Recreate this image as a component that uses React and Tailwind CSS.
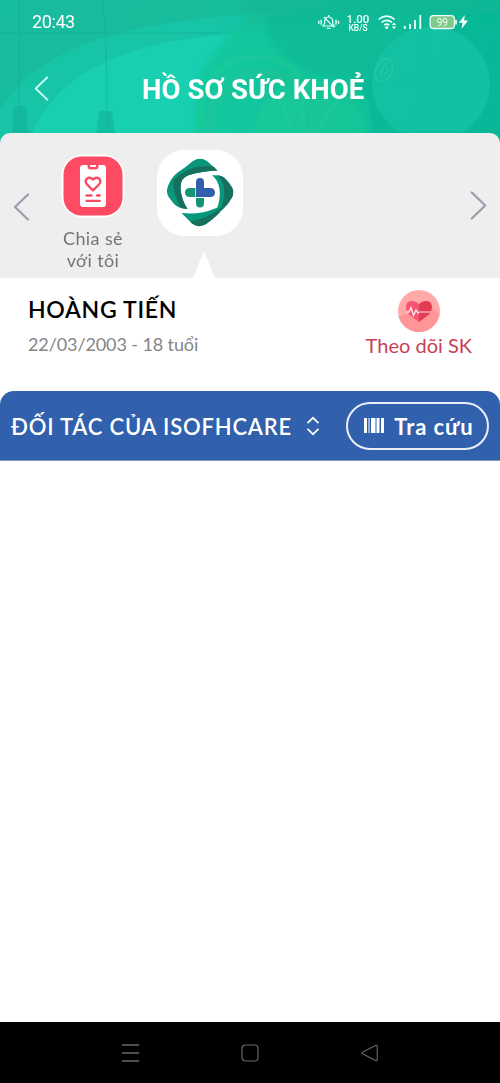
import { useState } from "react";

const PROFILE = {
  name: "HOÀNG TIẾN",
  birthday: "22/03/2003 - 18 tuổi",
};

function HeaderBackground() {
  return (
    <svg
      className="absolute inset-0 w-full h-full"
      viewBox="0 0 500 145"
      preserveAspectRatio="none"
      aria-hidden="true"
    >
      <defs>
        <linearGradient id="base" x1="0" x2="1" y1="0" y2="0.15">
          <stop offset="0" stopColor="#18bc9e" />
          <stop offset="0.5" stopColor="#18bd9b" />
          <stop offset="0.75" stopColor="#0cba98" />
          <stop offset="1" stopColor="#06b897" />
        </linearGradient>
        <linearGradient id="sweep" x1="0" x2="1" y1="0" y2="0">
          <stop offset="0" stopColor="#18cfb0" />
          <stop offset="0.65" stopColor="#18d0b0" />
          <stop offset="1" stopColor="#13c69c" stopOpacity="0.25" />
        </linearGradient>
        <filter id="soft" x="-10%" y="-10%" width="120%" height="120%">
          <feGaussianBlur stdDeviation="2.5" />
        </filter>
      </defs>
      <rect width="500" height="145" fill="url(#base)" />
      <path d="M0 110C35 55 100 22 270 13V145H0Z" fill="#18c6a9" opacity="0.8" />
      <path d="M28 145C45 85 110 40 240 34Q290 30 320 45V145Z" fill="url(#sweep)" />
      {/* fruit slices */}
      <g filter="url(#soft)">
        <path d="M250 14Q222 36 200 75Q190 100 196 150H370Q378 90 345 76Q290 76 276 30Z" fill="#15c498" opacity="0.7" />
        <path d="M262 20Q300 8 420 14V78Q350 84 305 70Q270 52 262 20Z" fill="#0fbb97" opacity="0.75" />
        <path d="M202 145C190 95 218 55 260 57Q296 62 300 80" fill="none" stroke="#1bcb91" strokeWidth="6" opacity="0.35" />
        <circle cx="262" cy="124" r="51" fill="none" stroke="#18c08e" strokeWidth="12" opacity="0.25" />
        <circle cx="310" cy="136" r="56" fill="#20cb98" opacity="0.35" />
        <path d="M302 90L304 145M279 98L299 145M340 97L307 145" fill="none" stroke="#45d8a3" strokeWidth="2" opacity="0.25" />
        <path d="M240 -6H506V12Q350 20 250 22Z" fill="#16b594" opacity="0.5" />
      </g>
      <path d="M0 33H223M19 0V145M102 0Q107 18 107 145" fill="none" stroke="#13af93" strokeWidth="1.6" opacity="0.45" />
      <path d="M14 106H26L29 145H11ZM99 111H112L117 145H95Z" fill="#10b193" opacity="0.55" />
      <ellipse cx="431" cy="84" rx="59" ry="57" fill="#16c3a5" opacity="0.75" />
      <ellipse cx="384" cy="70" rx="8" ry="12" fill="#14c09f" stroke="#29ceb0" strokeWidth="1.2" transform="rotate(25 384 70)" opacity="0.7" />
      <path d="M381 76Q381 67 387 63M385 75Q389 71 387 67" fill="none" stroke="#36cfb5" opacity="0.7" />
    </svg>
  );
}

function StatusIcons() {
  return (
    <div className="flex items-center">
      {/* muted bell */}
      <svg className="w-[23px] h-5" viewBox="317 12 23 20" fill="none" stroke="#e9fffa" aria-hidden="true">
        <path d="M318.8 20.8V23.8M321.2 19.8V24.8M336 19.8V24.8M338.5 20.8V23.8" strokeWidth="1.4" />
        <path d="M323 26H334.5L332.7 23.5V20.5Q332 17 328.7 17Q325.3 17 324.7 20.5V23.3ZM328.7 15V17M323.8 16.8L334 27.3M327 28.3H330.5" strokeWidth="1.2" />
      </svg>
      {/* network speed */}
      <div className="w-9 pt-px flex flex-col items-center font-['Roboto',sans-serif] font-medium text-[#effffb]">
        <span className="text-[11.5px] leading-[10px]">1.00</span>
        <span className="text-[8.5px] leading-[8px]">KB/S</span>
      </div>
      <svg className="w-[93px] h-5" viewBox="376 12 93 20" fill="none" stroke="#e9fffa" aria-hidden="true">
        {/* wifi */}
        <path d="M378.7 19.3Q386.5 12.8 394.7 19.3M381.5 22.4Q386.7 18.2 392 22.4M384 25.2Q386.8 23 389.4 25.2" strokeWidth="1.7" />
        <circle cx="386.8" cy="27.6" r="1.5" fill="#e9fffa" stroke="none" />
        <path d="M391.8 25L394 22.4L396.2 25ZM391.8 26.6L394 29.2L396.2 26.6Z" fill="#e9fffa" stroke="none" />
        {/* signal */}
        <path d="M404.8 26V29M410 24V29M415 20V29M420.3 15V29" strokeWidth="1.8" />
        {/* battery */}
        <rect x="430.2" y="15.7" width="24.2" height="12.8" rx="3.2" fill="#80c98c" strokeWidth="1.3" />
        <path d="M456 20V24.5" strokeWidth="1.6" />
        <text x="442.3" y="25.7" textAnchor="middle" className="font-['Roboto',sans-serif] text-[10px]" fill="#ecfff5" stroke="none">99</text>
        <path d="M464.7 15L459 22.7H462.6L461.5 29L468 20.5H464.2Z" fill="#fff" stroke="none" />
      </svg>
    </div>
  );
}

function ShareIcon() {
  return (
    <svg className="w-16 h-16" viewBox="0 0 64 64" aria-hidden="true">
      <rect x="0.5" y="0.5" width="63" height="63" rx="21" fill="#fff" />
      <rect x="2.5" y="2.5" width="59" height="59" rx="18" fill="#fe4b63" />
      <path d="M22 11H26.5V12.5Q26.5 15.5 29.5 15.5H34.5Q37.5 15.5 37.5 12.5V11H42Q45 11 45 14V50Q45 53 42 53H22Q19 53 19 50V14Q19 11 22 11Z" fill="#fff" />
      <path d="M29 11H35V12Q35 13 34 13H30Q29 13 29 12Z" fill="#fff" />
      <path d="M32 36.3L26 30.5C22 26 28 20.8 32 25.6C36 20.8 42 26 38 30.5Z" fill="none" stroke="#f94a63" strokeWidth="2.4" strokeLinejoin="round" />
      <path d="M25.5 41.5H30.5M36 41.5H38.8M25.5 46.8H38.8" stroke="#f94a63" strokeWidth="2.3" strokeLinecap="round" />
    </svg>
  );
}

function HospitalLogo() {
  return (
    <svg className="w-[86px] h-[86px]" viewBox="157 150 86 86" aria-hidden="true">
      <rect x="157" y="150" width="86" height="86" rx="27" fill="#fff" />
      {/* left blade */}
      <path d="M187.5 209Q179 209 174 204L169 197.5Q165.5 192 168 186Q171 178 177 173Q186 167 193 161Q200 156.5 207 161L217.5 170.5Q202 171 189 175Q180 178 180.5 188Q181 199 187.5 209Z" fill="#08977a" />
      <path d="M187.5 209Q183 208.500 180 207Q172 190 173.500 180Q187 167 201 166.500Q208 165.500 213.500 166.800L217.500 170.500Q202 171 189 175Q180 178 180.500 188Q181 199 187.500 209Z" fill="#17705d" />
      {/* right blade */}
      <path d="M212 175.300Q220 174.500 224.500 178Q229 182 232 187.500Q234.500 192 232 197.500Q228 205 222 210L216 211Q221 199 219.500 189Q218 180 212 175.300Z" fill="#08977a" />
      <path d="M217 175.300Q222 175.300 225.500 179Q229.500 183 232 187.500Q234.500 192 232 197.500Q228 205 222 210L220 210Q227 194 223 184Q221 178 217 175.300Z" fill="#17705d" />
      {/* bottom blade */}
      <path d="M181.500 213Q200 215 215 208.500L225 205Q220 214 207.500 223Q200 229 192 223.500Z" fill="#08977a" />
      <path d="M190.500 221.500Q209 218 225.500 204.500Q220 214 207.500 223Q200 229 192 223.500Z" fill="#17705d" />
      {/* cross */}
      <path d="M195.300 188H190Q185 188 185 192.500Q185 197 190 197H195.300Z" fill="#139675" />
      <path d="M196 198V203Q196 207.500 200 207.500Q204 207.500 204 203V198Z" fill="#139675" />
      <path d="M196 197V182Q196 178 200 178Q204 178 204 182V188H210Q215 188 215 192.500Q215 197 210 197Z" fill="#315fad" />
    </svg>
  );
}

function HeartIcon() {
  return (
    <svg className="w-[42px] h-[42px]" viewBox="398 290 42 42" aria-hidden="true">
      <circle cx="419" cy="311" r="21" fill="#ffa9a9" />
      <path d="M408 314L398.300 316Q402 329 416 332Q434 333 439.500 315L430 305Z" fill="#ff9597" />
      <path d="M419 322L409 314.500C403 307 407 300.500 412 301Q417 301 419 304.500Z" fill="#f65571" />
      <path d="M419 322L429 314.500C435 307 431 300.500 426 301Q421 301 419 304.500Z" fill="#e33c52" />
      <path d="M407 312H409L411 307.500L413.500 315.500L416 310L418 313L419 312" fill="none" stroke="#fff2f4" strokeWidth="1.3" />
      <path d="M419 312H431" stroke="#f6a9b1" strokeWidth="1.5" />
    </svg>
  );
}

function Chevron({ flip, className }) {
  return (
    <svg className={className} viewBox="0 0 16 28" fill="none" stroke="currentColor" strokeWidth="2.2" strokeLinecap="round" strokeLinejoin="round" aria-hidden="true">
      <path d={flip ? "M1.5 1.5L14.5 14L1.5 26.5" : "M14.5 1.5L1.5 14L14.5 26.5"} />
    </svg>
  );
}

export default function App() {
  const [expanded, setExpanded] = useState(false);

  return (
    <div className="w-[500px] h-[1083px] flex flex-col bg-white overflow-hidden font-['Lato','Noto_Sans',sans-serif]">
      {/* Header */}
      <header className="relative h-[133px] shrink-0 text-white">
        <div className="absolute inset-x-0 top-0 h-[145px]">
          <HeaderBackground />
        </div>
        <div className="relative h-11 flex items-center justify-between pl-8 pr-[31px]">
          <span className="font-['Roboto',sans-serif] text-[18px] leading-5 tracking-[-0.4px]">
            20:43
          </span>
          <StatusIcons />
        </div>
        <div className="relative h-[89px] flex items-center pl-[34px]">
          <button aria-label="Quay lại" className="text-[#cafff3]">
            <Chevron className="w-[15px] h-[25px]" />
          </button>
          <h1 className="ml-[93px] pt-[2px] whitespace-nowrap font-['Roboto',sans-serif] font-bold text-[27.5px] leading-8 tracking-[0.1px]">
            HỒ SƠ SỨC KHOẺ
          </h1>
        </div>
      </header>

      {/* Hospital carousel */}
      <section className="relative h-[145px] shrink-0 flex items-start bg-[#eeeeee] rounded-t-[10px]">
        <button aria-label="Trước" className="mt-[60px] ml-[13px] text-[#9c9dab]">
          <Chevron className="w-[17px] h-[28px]" />
        </button>
        <button className="mt-[21px] ml-[18px] w-[90px] flex flex-col items-center text-[18px] leading-[22px] text-[#747474]">
          <ShareIcon />
          <span className="mt-[9px] tracking-[0.4px]">
            Chia sẻ
            <br />
            với tôi
          </span>
        </button>
        <button aria-label="ISOFHCARE" className="mt-[17px] ml-[19px] flex flex-col items-center">
          <HospitalLogo />
          <svg className="mt-[15px] ml-[7px] w-[22px] h-[27px]" viewBox="0 0 22 27">
            <path d="M11 0L22 27H0Z" fill="#fff" />
          </svg>
        </button>
        <button aria-label="Sau" className="mt-[58px] ml-auto mr-[13px] text-[#9c9dab]">
          <Chevron flip className="w-[17px] h-[29px]" />
        </button>
      </section>

      {/* Patient */}
      <section className="h-[113px] shrink-0 flex justify-between pl-7 pr-7">
        <div className="pt-4">
          <h2 className="text-[23px] font-semibold leading-[30px] tracking-[0.7px] text-black">{PROFILE.name}</h2>
          <p className="mt-[8px] text-[18px] leading-6 tracking-[-0.1px] text-[#858585]">{PROFILE.birthday}</p>
        </div>
        <button className="pt-3 flex flex-col items-center text-[20px] leading-6 text-[#c83e54]">
          <HeartIcon />
          <span className="mt-px">Theo dõi SK</span>
        </button>
      </section>

      {/* Partner bar */}
      <section className="h-[70px] shrink-0 flex items-center justify-between pl-[11px] pr-[11px] bg-[#3160ac] rounded-t-[14px] border-b border-[#829cc7] text-white font-semibold">
        <button
          onClick={() => setExpanded(!expanded)}
          className="flex items-center gap-[14px] text-[22px] leading-7 whitespace-nowrap"
        >
          <span className="pt-[2px] tracking-[0.8px]">ĐỐI TÁC CỦA ISOFHCARE</span>
          <svg className="w-[14px] h-5" viewBox="0 0 14 20" fill="none" stroke="white" strokeWidth="1.7" aria-hidden="true">
            <path d="M1.5 7.2L7 1.8L12.5 7.2M1.5 12.8L7 18.2L12.5 12.8" />
          </svg>
        </button>
        <button className="w-[143px] h-12 pl-[3px] flex items-center justify-center gap-[10px] rounded-full border-2 border-white/90 text-[22px] font-bold leading-7 whitespace-nowrap">
          <svg className="w-5 h-[15px]" viewBox="0 0 20 15" fill="white" aria-hidden="true">
            <path d="M0 0H3V15H0ZM4.500 0H5.500V15H4.500ZM7 0H11.500V15H7ZM12.500 0H15.500V15H12.500ZM17 0H20V15H17Z" />
          </svg>
          <span className="pt-[2px] tracking-[0.9px]">Tra cứu</span>
        </button>
      </section>

      <main className="flex-1" />

      {/* Android navigation */}
      <nav className="h-[61px] shrink-0 flex items-center justify-between pl-[122px] pr-[122px] bg-black text-[#686868]">
        <svg className="w-[17px] h-[18px]" viewBox="0 0 17 18" stroke="currentColor" strokeWidth="1.3">
          <path d="M0 1H17M0 9H17M0 17H17" />
        </svg>
        <svg className="w-[18px] h-[18px]" viewBox="0 0 18 18" fill="none" stroke="currentColor" strokeWidth="1.2">
          <rect x="1" y="1" width="16" height="16" rx="3.5" />
        </svg>
        <svg className="w-[17px] h-[18px]" viewBox="0 0 17 18" fill="none" stroke="currentColor" strokeWidth="1.1" strokeLinejoin="round">
          <path d="M15 1.3L1.5 8.3Q0.5 9 1.5 9.7L15 16.7Q16.2 17 16.2 16V2Q16.2 1 15 1.3Z" />
        </svg>
      </nav>
    </div>
  );
}
